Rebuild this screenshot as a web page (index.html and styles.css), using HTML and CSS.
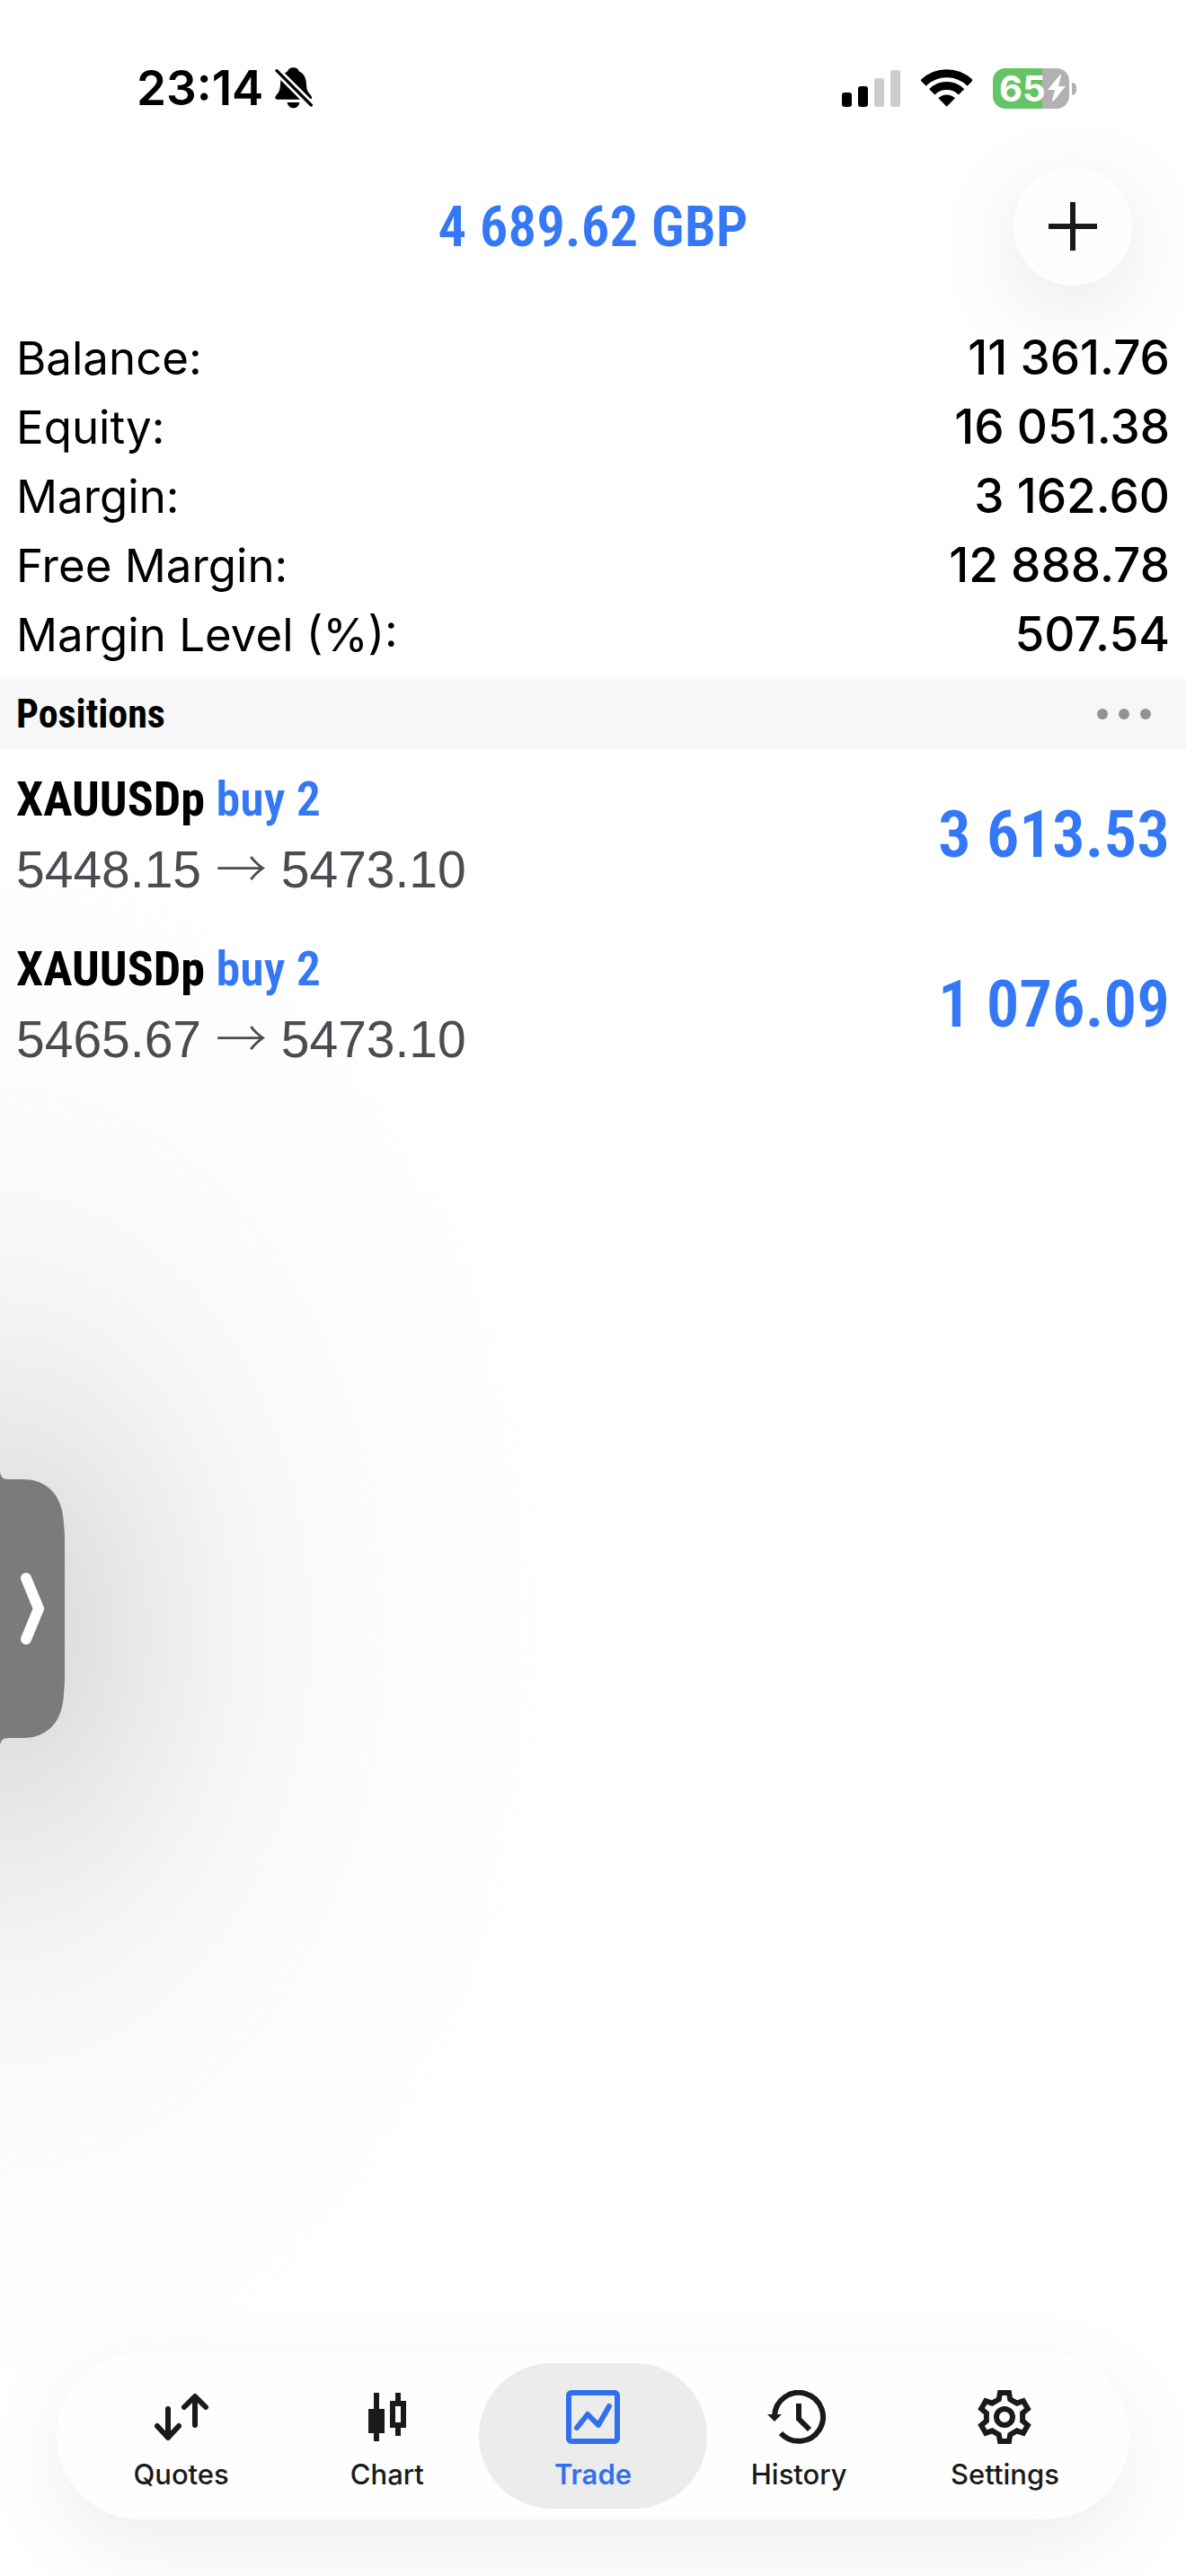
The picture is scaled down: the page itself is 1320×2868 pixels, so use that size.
FILE: index.html
```html
<!DOCTYPE html>
<html lang="en">
<head>
    <meta charset="UTF-8">
    <meta name="viewport" content="width=device-width, initial-scale=1.0">
    <title>Trade</title>
    <link rel="stylesheet" href="styles.css">
</head>
<body>
    <!-- status bar -->
    <div class="status-bar">
        <div class="status-left">
            <span class="time">23:14</span>
            <svg class="bell" viewBox="0 0 126 136">
                <path d="M62 0C50 0 44 6 43 12C24 20 19 38 18 55C17 78 12 82 5 91C-2 100 0 106 8 106H116C124 106 126 100 119 91C110 80 106 78 105 55C104 38 99 20 80 12C78 6 74 0 62 0Z"/>
                <path d="M-4 0L131 135" stroke="#fff" stroke-width="26"/>
                <path d="M41 116H82C80 128 72 135 62 135S43 128 41 116Z"/>
                <path d="M6 10L121 125" stroke="#000" stroke-width="10" stroke-linecap="round"/>
            </svg>
        </div>
        <div class="status-right">
            <svg class="signal" viewBox="0 0 65 41">
                <rect x="0" y="25" width="11" height="16" rx="3"/>
                <rect x="18" y="18" width="11" height="23" rx="3"/>
                <rect x="36" y="9" width="11" height="32" rx="3" fill="#ccc"/>
                <rect x="54" y="0" width="11" height="41" rx="3" fill="#ccc"/>
            </svg>
            <svg class="wifi" viewBox="0 0 171 126">
                <path d="M7.500 46.500A111 111 0 0 1 164.500 46.500M37 76A69 69 0 0 1 135 76" fill="none" stroke="#000" stroke-width="27"/>
                <path d="M58 97A39 39 0 0 1 114 97L86 125Z"/>
            </svg>
            <div class="battery">
                <span class="battery-level">65</span>
                <svg class="bolt" viewBox="0 0 20 30">
                    <path d="M14 0L0 17H8L5 29Q6 30 7 29L20 13H12L15 1Z" fill="#fff"/>
                </svg>
            </div>
        </div>
    </div>

    <header class="header">
        <h1 class="profit">4 689.62 GBP</h1>
        <button class="add-button" aria-label="New order">
            <svg viewBox="0 0 54 54"><path d="M27 0V54M0 27H54" stroke="#1a1a1a" stroke-width="6"/></svg>
        </button>
    </header>

    <main>
        <!-- account summary -->
        <dl class="summary">
            <div class="summary-row"><dt>Balance:</dt><dd>11 361.76</dd></div>
            <div class="summary-row"><dt>Equity:</dt><dd>16 051.38</dd></div>
            <div class="summary-row"><dt>Margin:</dt><dd>3 162.60</dd></div>
            <div class="summary-row"><dt>Free Margin:</dt><dd>12 888.78</dd></div>
            <div class="summary-row"><dt>Margin Level (%):</dt><dd>507.54</dd></div>
        </dl>

        <div class="section-bar">
            <h2>Positions</h2>
            <button class="more-button" aria-label="More">
                <svg viewBox="0 0 60 12"><circle cx="6" cy="6" r="6"/><circle cx="30" cy="6" r="6"/><circle cx="54" cy="6" r="6"/></svg>
            </button>
        </div>

        <!-- open positions -->
        <ul class="positions">
            <li class="position">
                <div>
                    <div class="symbol">XAUUSDp <span class="side">buy 2</span></div>
                    <div class="prices">5448.15 <span class="arrow">→</span> 5473.10</div>
                </div>
                <div class="pnl">3 613.53</div>
            </li>
            <li class="position">
                <div>
                    <div class="symbol">XAUUSDp <span class="side">buy 2</span></div>
                    <div class="prices">5465.67 <span class="arrow">→</span> 5473.10</div>
                </div>
                <div class="pnl">1 076.09</div>
            </li>
        </ul>
    </main>

    <!-- drawer handle on the left edge -->
    <div class="drawer">
        <button class="drawer-button" aria-label="Open drawer">
            <svg viewBox="0 0 72 304">
                <path d="M0 0C1 5 3 8 9 8H25C53 8 70 26 71 58C72 68 72 70 72 80V224C72 234 72 236 71 246C70 278 53 296 25 296H9C3 296 1 299 0 304Z" fill="#7b7b7b"/>
                <path d="M29 118L43 152L29 186" fill="none" stroke="#fff" stroke-width="12" stroke-linecap="round" stroke-linejoin="round"/>
            </svg>
        </button>
    </div>

    <nav class="tab-bar">
        <a class="tab" href="#quotes">
            <svg viewBox="-35 -30 70 60" fill="none" stroke="currentColor" stroke-width="6" stroke-linecap="round" stroke-linejoin="round">
                <path d="M-15 -9V22M-27 10L-15 23L-3 10M15 9V-22M3 -11L15 -23L27 -11"/>
            </svg>
            <span>Quotes</span>
        </a>
        <a class="tab" href="#chart">
            <svg viewBox="-35 -30 70 60" fill="currentColor">
                <path d="M-15 -27H-9V-9H-3V18H-9V27H-15V18H-21V-9H-15Z"/>
                <path fill-rule="evenodd" d="M9 -27H15V-18H21V12H15V21H9V12H3V-18H9ZM9 -12V6H15V-12Z"/>
            </svg>
            <span>Chart</span>
        </a>
        <a class="tab active" href="#trade" aria-current="page">
            <svg viewBox="-35 -30 70 60" fill="none" stroke="currentColor" stroke-width="6" stroke-linecap="round" stroke-linejoin="round">
                <rect x="-27" y="-27" width="54" height="54" rx="3"/>
                <path d="M-18 12L-6 -3L6 9L18 -12"/>
            </svg>
            <span>Trade</span>
        </a>
        <a class="tab" href="#history">
            <svg viewBox="-35 -30 70 60" fill="none" stroke="currentColor" stroke-width="6">
                <path d="M-27 -1A27 27 0 1 1 -20 18"/>
                <path d="M0 -15V2L12 14"/>
                <path d="M-35 -3H-19L-27 5Z" fill="currentColor" stroke="none"/>
            </svg>
            <span>History</span>
        </a>
        <a class="tab" href="#settings">
            <svg viewBox="-35 -30 70 60" fill="none" stroke="currentColor" stroke-width="6">
                <path d="M-6.300 -19.600L-5 -27H5L6.300 -19.600L13.800 -15.300L20.900 -17.800L25.900 -9.200L20.100 -4.300V4.300L25.900 9.200L20.900 17.800L13.800 15.300L6.300 19.600L5 27H-5L-6.300 19.600L-13.800 15.300L-20.900 17.800L-25.900 9.200L-20.100 4.300V-4.300L-25.900 -9.200L-20.900 -17.800L-13.800 -15.300Z"/>
                <circle r="9"/>
            </svg>
            <span>Settings</span>
        </a>
    </nav>
</body>
</html>
```

FILE: styles.css
```css
* {
    box-sizing: border-box;
}
body {
    margin: 0;
    min-height: 100vh;
    display: flex;
    flex-direction: column;
    position: relative;
    overflow-x: hidden;
    background-color: #fff;
    color: #000;
    font-family: Inter, "Liberation Sans", sans-serif;
}
svg {
    display: block;
}
button {
    border: none;
    padding: 0;
    background: none;
}

/* status bar */
.status-bar {
    display: flex;
    justify-content: space-between;
    align-items: center;
    height: 186px;
    padding: 10px 130px 0 152px;
}
.status-left,
.status-right {
    display: flex;
    align-items: center;
}
.status-left {
    gap: 13px;
}
.status-right {
    gap: 23px;
}
.time {
    font-size: 53px;
    font-weight: 600;
}
.bell {
    width: 42px;
    height: 46px;
}
.signal {
    width: 65px;
    height: 41px;
}
.wifi {
    width: 57px;
    height: 42px;
}
.battery {
    position: relative;
    display: flex;
    align-items: center;
    gap: 2px;
    width: 85px;
    height: 45px;
    padding-left: 7px;
    border-radius: 14px;
    background: linear-gradient(to right, #65c466 65%, #b1b1b1 65%);
}
.battery::after {
    content: "";
    position: absolute;
    right: -8px;
    top: 16px;
    width: 5px;
    height: 14px;
    border-radius: 0 5px 5px 0;
    background-color: #b1b1b1;
}
.battery-level {
    font-size: 40px;
    font-weight: 700;
    line-height: 45px;
    color: #fff;
}
.bolt {
    width: 20px;
    height: 30px;
}

/* header */
.header {
    display: grid;
    grid-template-columns: 1fr auto 1fr;
    align-items: center;
    height: 132px;
    padding: 0 60px;
}
.profit,
.section-bar h2,
.symbol,
.pnl {
    font-family: "Roboto Condensed", Roboto, sans-serif;
    font-weight: 700;
}
.profit {
    grid-column: 2;
    margin: 0;
    font-size: 63px;
    font-weight: 600;
    color: #3478f6;
}
.add-button {
    display: flex;
    justify-content: center;
    align-items: center;
    justify-self: end;
    width: 132px;
    height: 132px;
    border-radius: 50%;
    background-color: #fefefe;
    box-shadow: 0 24px 100px rgba(0, 0, 0, 0.1);
}
.add-button svg {
    width: 54px;
    height: 54px;
}

/* account summary */
.summary {
    margin: 0;
    padding: 42px 18px 11px;
}
.summary-row {
    display: flex;
    justify-content: space-between;
    line-height: 77px;
}
.summary-row dt {
    font-size: 51px;
}
.summary-row dd {
    margin: 0;
    font-size: 53px;
    font-weight: 500;
}

.section-bar {
    display: flex;
    justify-content: space-between;
    align-items: center;
    height: 78px;
    padding: 0 39px 0 18px;
    background-color: #f7f7f7;
}
.section-bar h2 {
    margin: 0;
    font-size: 44px;
}
.more-button svg {
    width: 60px;
    height: 12px;
    fill: #929292;
}

/* open positions */
.positions {
    margin: 0;
    padding: 0;
    list-style: none;
}
.position {
    display: flex;
    justify-content: space-between;
    align-items: center;
    padding: 16px 18px 15px;
}
.symbol {
    font-size: 54px;
    line-height: 79px;
}
.side {
    font-weight: 600;
    color: #3478f6;
}
.prices {
    font-family: "Liberation Sans", sans-serif;
    font-size: 57px;
    line-height: 79px;
    color: #4c4b51;
}
.arrow {
    font-family: "Noto Sans CJK JP", sans-serif;
    font-weight: 300;
    line-height: 1;
}
.pnl {
    font-size: 73px;
    font-weight: 600;
    color: #3478f6;
}

/* drawer handle, floats over the page with a wide soft shadow */
.drawer {
    position: absolute;
    left: 0;
    top: 1639px;
}
.drawer::before {
    content: "";
    position: absolute;
    left: 0;
    top: -724px;
    width: 640px;
    height: 1800px;
    background: radial-gradient(640px 900px at left center, rgba(0, 0, 0, 0.15) 0%, rgba(0, 0, 0, 0.13) 11%, rgba(0, 0, 0, 0.08) 27%, rgba(0, 0, 0, 0.04) 42%, rgba(0, 0, 0, 0.02) 56%, rgba(0, 0, 0, 0.006) 78%, rgba(0, 0, 0, 0) 100%);
    pointer-events: none;
}
.drawer-button {
    position: relative;
    display: block;
}
.drawer-button svg {
    width: 72px;
    height: 304px;
}

/* bottom tabs */
.tab-bar {
    position: relative;
    display: flex;
    margin: auto 63px 63px;
    padding: 12px;
    border-radius: 93px;
    background-color: #fefefe;
    box-shadow: 0 30px 100px rgba(0, 0, 0, 0.075);
}
.tab {
    flex: 1;
    display: flex;
    flex-direction: column;
    align-items: center;
    gap: 14px;
    height: 162px;
    padding-top: 30px;
    border-radius: 81px;
    color: #1a1a1a;
    font-size: 31px;
    font-weight: 500;
    line-height: 40px;
    text-decoration: none;
}
/* neighbouring tabs overlap so the highlight is wider than a column */
.tab + .tab {
    margin-left: -24px;
}
.tab svg {
    width: 70px;
    height: 60px;
}
.tab.active {
    background-color: #ececec;
    color: #3070f0;
    font-weight: 600;
}
```
